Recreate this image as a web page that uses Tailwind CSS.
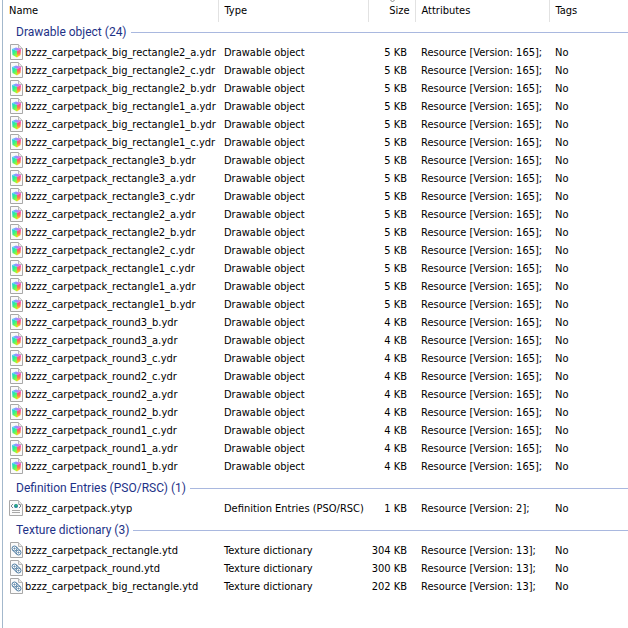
<!DOCTYPE html>
<html lang="en">
<head>
    <meta charset="UTF-8">
    <meta name="viewport" content="width=device-width, initial-scale=1.0">
    <title>Carpet pack</title>
    <script src="https://cdn.jsdelivr.net/npm/@tailwindcss/browser@4"></script>
</head>
<body class="min-h-screen bg-white pl-0.5 font-['DejaVu_Sans_Condensed','DejaVu_Sans',sans-serif] text-[11px] leading-4 text-black">
    <!-- Icons shared by the rows -->
    <svg class="absolute size-0" aria-hidden="true">
        <defs>
            <linearGradient id="hue-top" x1="0" y1="0" x2="1" y2="0">
                <stop offset="0" stop-color="#40d8ff"/>
                <stop offset=".5" stop-color="#9a8cff"/>
                <stop offset="1" stop-color="#ff5ae0"/>
            </linearGradient>
            <linearGradient id="hue-left" x1="0" y1="0" x2=".6" y2="1">
                <stop offset="0" stop-color="#20c8ff"/>
                <stop offset=".5" stop-color="#30f090"/>
                <stop offset="1" stop-color="#b0f820"/>
            </linearGradient>
            <linearGradient id="hue-right" x1="0" y1="0" x2="0" y2="1">
                <stop offset="0" stop-color="#f838c0"/>
                <stop offset=".5" stop-color="#ff7050"/>
                <stop offset="1" stop-color="#ffe820"/>
            </linearGradient>
        </defs>
        <symbol id="page" viewBox="0 0 14 16">
            <path d="M1.5.5h8l4 4v11h-12z" fill="#fafafa" stroke="#a8a8a8"/>
            <path d="M9.5.5v4h4" fill="#e8e8e8" stroke="#b8b8b8"/>
        </symbol>
        <symbol id="icon-ydr" viewBox="0 0 14 16">
            <use href="#page" width="14" height="16"/>
            <path d="M3 5 7 3.5 12 5 8 7z" fill="url(#hue-top)"/>
            <path d="M3 5l5 2v6.5L3.5 11z" fill="url(#hue-left)"/>
            <path d="M8 7l4-2-.5 6L8 13.5z" fill="url(#hue-right)"/>
        </symbol>
        <symbol id="icon-ytyp" viewBox="0 0 14 16">
            <path d="M.5.5h9l4 4v11H.5z" fill="#fafafa" stroke="#a8a8a8"/>
            <path d="M9.5.5v4h4" fill="#e8e8e8" stroke="#b8b8b8"/>
            <path d="M4 4 2 6l2 2M10 4l2 2-2 2" fill="none" stroke="#7c8490"/>
            <circle cx="7" cy="6" r="2" fill="#1d7f9c"/>
            <circle cx="7" cy="5.5" r="1" fill="#2fc46c"/>
            <path d="M3 10.5h8M3 12.5h8" stroke="#a8a8a8"/>
        </symbol>
        <symbol id="icon-ytd" viewBox="0 0 14 16">
            <use href="#page" width="14" height="16"/>
            <g fill="none" stroke="#3d6f9a" stroke-width=".9">
                <circle cx="5.5" cy="6.5" r="2.5"/>
                <circle cx="5.5" cy="6.5" r=".6"/>
                <circle cx="9.5" cy="10.5" r="2.5"/>
                <circle cx="9.5" cy="10.5" r=".6"/>
                <path d="M4 8.5l3.5 3.5M7.5 5l3.5 3.5"/>
            </g>
        </symbol>
    </svg>

    <main class="min-h-screen border-l border-[#a3b8cc]">
        <table class="w-full table-fixed border-collapse whitespace-nowrap">
            <colgroup>
                <col class="w-[215px]">
                <col class="w-[150px]">
                <col class="w-[47px]">
                <col class="w-[134px]">
                <col>
            </colgroup>
            <thead>
                <tr class="text-left leading-[22px] *:font-normal">
                    <th class="border-r border-[#e2e2e2] pl-1.5">Name</th>
                    <th class="border-r border-[#e2e2e2] pl-1.5">Type</th>
                    <th class="relative border-r border-[#e2e2e2] pr-[5px] text-right" aria-sort="descending">
                        <svg class="absolute top-0 left-5 h-[3px] w-[7px]" viewBox="0 0 7 3"><path d="M.5-1l3 3 3-3" fill="none" stroke="#8a8a8a"/></svg>
                        Size
                    </th>
                    <th class="border-r border-[#e2e2e2] pl-1.5">Attributes</th>
                    <th class="pl-1.5">Tags</th>
                </tr>
            </thead>
        </table>
    </main>

    <script>
        const groups = [
            {
                title: 'Drawable object', ext: 'ydr', attributes: 'Resource [Version: 165];',
                files: [
                    ['big_rectangle2_a', 5], ['big_rectangle2_c', 5], ['big_rectangle2_b', 5],
                    ['big_rectangle1_a', 5], ['big_rectangle1_b', 5], ['big_rectangle1_c', 5],
                    ['rectangle3_b', 5], ['rectangle3_a', 5], ['rectangle3_c', 5],
                    ['rectangle2_a', 5], ['rectangle2_b', 5], ['rectangle2_c', 5],
                    ['rectangle1_c', 5], ['rectangle1_a', 5], ['rectangle1_b', 5],
                    ['round3_b', 4], ['round3_a', 4], ['round3_c', 4],
                    ['round2_c', 4], ['round2_a', 4], ['round2_b', 4],
                    ['round1_c', 4], ['round1_a', 4], ['round1_b', 4],
                ],
            },
            {
                title: 'Definition Entries (PSO/RSC)', ext: 'ytyp', attributes: 'Resource [Version: 2];',
                files: [['', 1]],
            },
            {
                title: 'Texture dictionary', ext: 'ytd', attributes: 'Resource [Version: 13];',
                files: [['rectangle', 304], ['round', 300], ['big_rectangle', 202]],
            },
        ];

        const fileName = (part, ext) => ['bzzz_carpetpack', part].filter(Boolean).join('_') + '.' + ext;

        const fileRow = (group, [part, size]) => `
            <tr>
                <td class="pl-1.5">
                    <div class="flex items-center gap-0.5">
                        <svg class="h-4 w-3.5 shrink-0" aria-hidden="true"><use href="#icon-${group.ext}"/></svg>
                        <span class="pt-0.5">${fileName(part, group.ext)}</span>
                    </div>
                </td>
                <td class="pt-0.5 pl-1.5">${group.title}</td>
                <td class="pt-0.5 pr-2 text-right">${size} KB</td>
                <td class="pt-0.5 pl-1.5">${group.attributes}</td>
                <td class="pt-0.5 pl-1.5">No</td>
            </tr>`;

        // The first group sits directly under the header, the others have a little space above
        const table = document.querySelector('table');
        groups.forEach((group, i) => {
            const body = document.createElement('tbody');
            body.innerHTML = `
                <tr>
                    <th colspan="5" class="${i ? 'pt-[3px]' : ''} pb-px font-normal">
                        <div class="flex h-5 items-center gap-1 pl-[13px] font-[Roboto,sans-serif] text-[12px] leading-5 text-[#1e3287]">
                            <span>${group.title} (${group.files.length})</span>
                            <span class="h-px flex-1 bg-[#a9b8df]"></span>
                        </div>
                    </th>
                </tr>` + group.files.map((file) => fileRow(group, file)).join('');
            table.append(body);
        });
    </script>
</body>
</html>
